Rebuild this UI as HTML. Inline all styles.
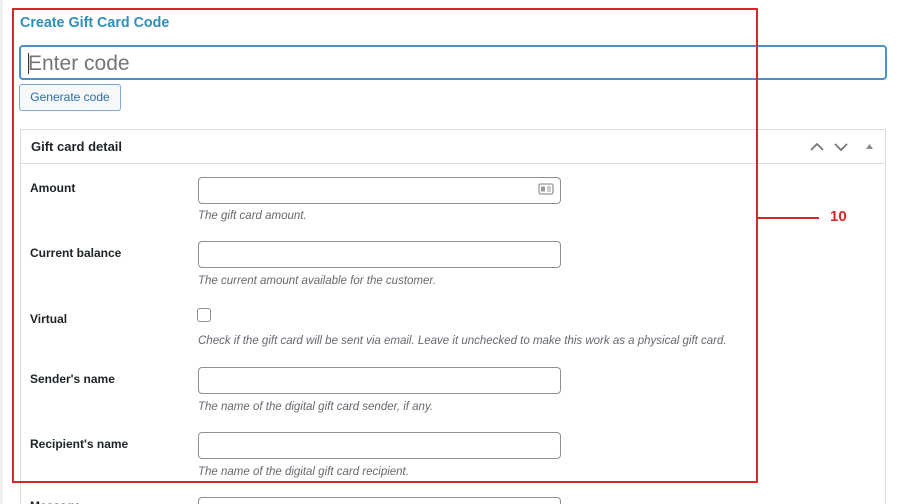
<!DOCTYPE html>
<html style="overflow:hidden;height:504px"><head><style>
html,body{overflow:hidden}
body{margin:0;width:898px;height:504px;background:#fff;font-family:"Liberation Sans",sans-serif;position:relative;overflow:hidden}
.a{position:absolute}
.lbl{position:absolute;left:30px;font-size:12px;font-weight:bold;color:#1d2327}
.inp{position:absolute;left:198px;width:361px;height:25px;border:1px solid #8c8f94;border-radius:4px;background:#fff}
.desc{position:absolute;left:198px;font-size:11.5px;font-style:italic;color:#646970}
</style></head><body>
<div class="a" style="left:0;top:0;width:3px;height:504px;background:#f0f0f1"></div>
<div class="a" style="left:20px;top:15px;font-size:14.3px;font-weight:bold;color:#2e8fb8">Create Gift Card Code</div>
<div class="a" style="left:19px;top:45px;width:864px;height:31px;border:2px solid #4a8fd0;border-radius:4px"></div>
<div class="a" style="left:28px;top:52px;font-size:21px;color:#757575">Enter code</div>
<div class="a" style="left:28px;top:53px;width:1px;height:21px;background:#333"></div>
<div class="a" style="left:19px;top:84px;width:100px;height:25px;border:1px solid #7fa8d4;border-radius:3px;background:#f6f7f7;font-size:12px;color:#2a6ea8;text-align:center;line-height:25px">Generate code</div>
<div class="a" style="left:20px;top:129px;width:864px;height:380px;border:1px solid #dcdcde"></div>
<div class="a" style="left:21px;top:163px;width:864px;height:1px;background:#dcdcde"></div>
<div class="a" style="left:31px;top:139px;font-size:13px;font-weight:bold;color:#1d2327">Gift card detail</div>
<svg class="a" style="left:808px;top:139px" width="70" height="16"><path d="M3 11L9 5L15 11" stroke="#777" stroke-width="1.8" fill="none"/><path d="M27 5L33 11L39 5" stroke="#777" stroke-width="1.8" fill="none"/><path d="M58 10L61.5 5L65 10Z" fill="#888"/></svg>
<div class="lbl" style="top:181px">Amount</div>
<div class="inp" style="top:177px"></div>
<svg class="a" style="left:538px;top:183px" width="16" height="13"><rect x="1" y="1" width="14" height="10" rx="1.5" fill="none" stroke="#999" stroke-width="1.3"/><rect x="3" y="3.5" width="4" height="5" fill="#999"/><path d="M9 4h4M9 6h4M9 8h4" stroke="#999"/></svg>
<div class="desc" style="top:210px">The gift card amount.</div>
<div class="lbl" style="top:246px">Current balance</div>
<div class="inp" style="top:241px"></div>
<div class="desc" style="top:275px">The current amount available for the customer.</div>
<div class="lbl" style="top:312px">Virtual</div>
<div class="a" style="left:197px;top:308px;width:12px;height:12px;border:1px solid #8c8f94;border-radius:3px"></div>
<div class="desc" style="top:335px">Check if the gift card will be sent via email. Leave it unchecked to make this work as a physical gift card.</div>
<div class="lbl" style="top:372px">Sender's name</div>
<div class="inp" style="top:367px"></div>
<div class="desc" style="top:401px">The name of the digital gift card sender, if any.</div>
<div class="lbl" style="top:437px">Recipient's name</div>
<div class="inp" style="top:432px"></div>
<div class="desc" style="top:466px">The name of the digital gift card recipient.</div>
<div class="inp" style="top:497px"></div>
<div class="lbl" style="top:499px">Message</div>
<div class="a" style="left:12px;top:8px;width:742px;height:471px;border:2px solid #d9262c"></div>
<div class="a" style="left:756px;top:217px;width:63px;height:2px;background:#d9262c"></div>
<div class="a" style="left:830px;top:208px;font-size:15px;font-weight:bold;color:#d9262c">10</div>
</body></html>
